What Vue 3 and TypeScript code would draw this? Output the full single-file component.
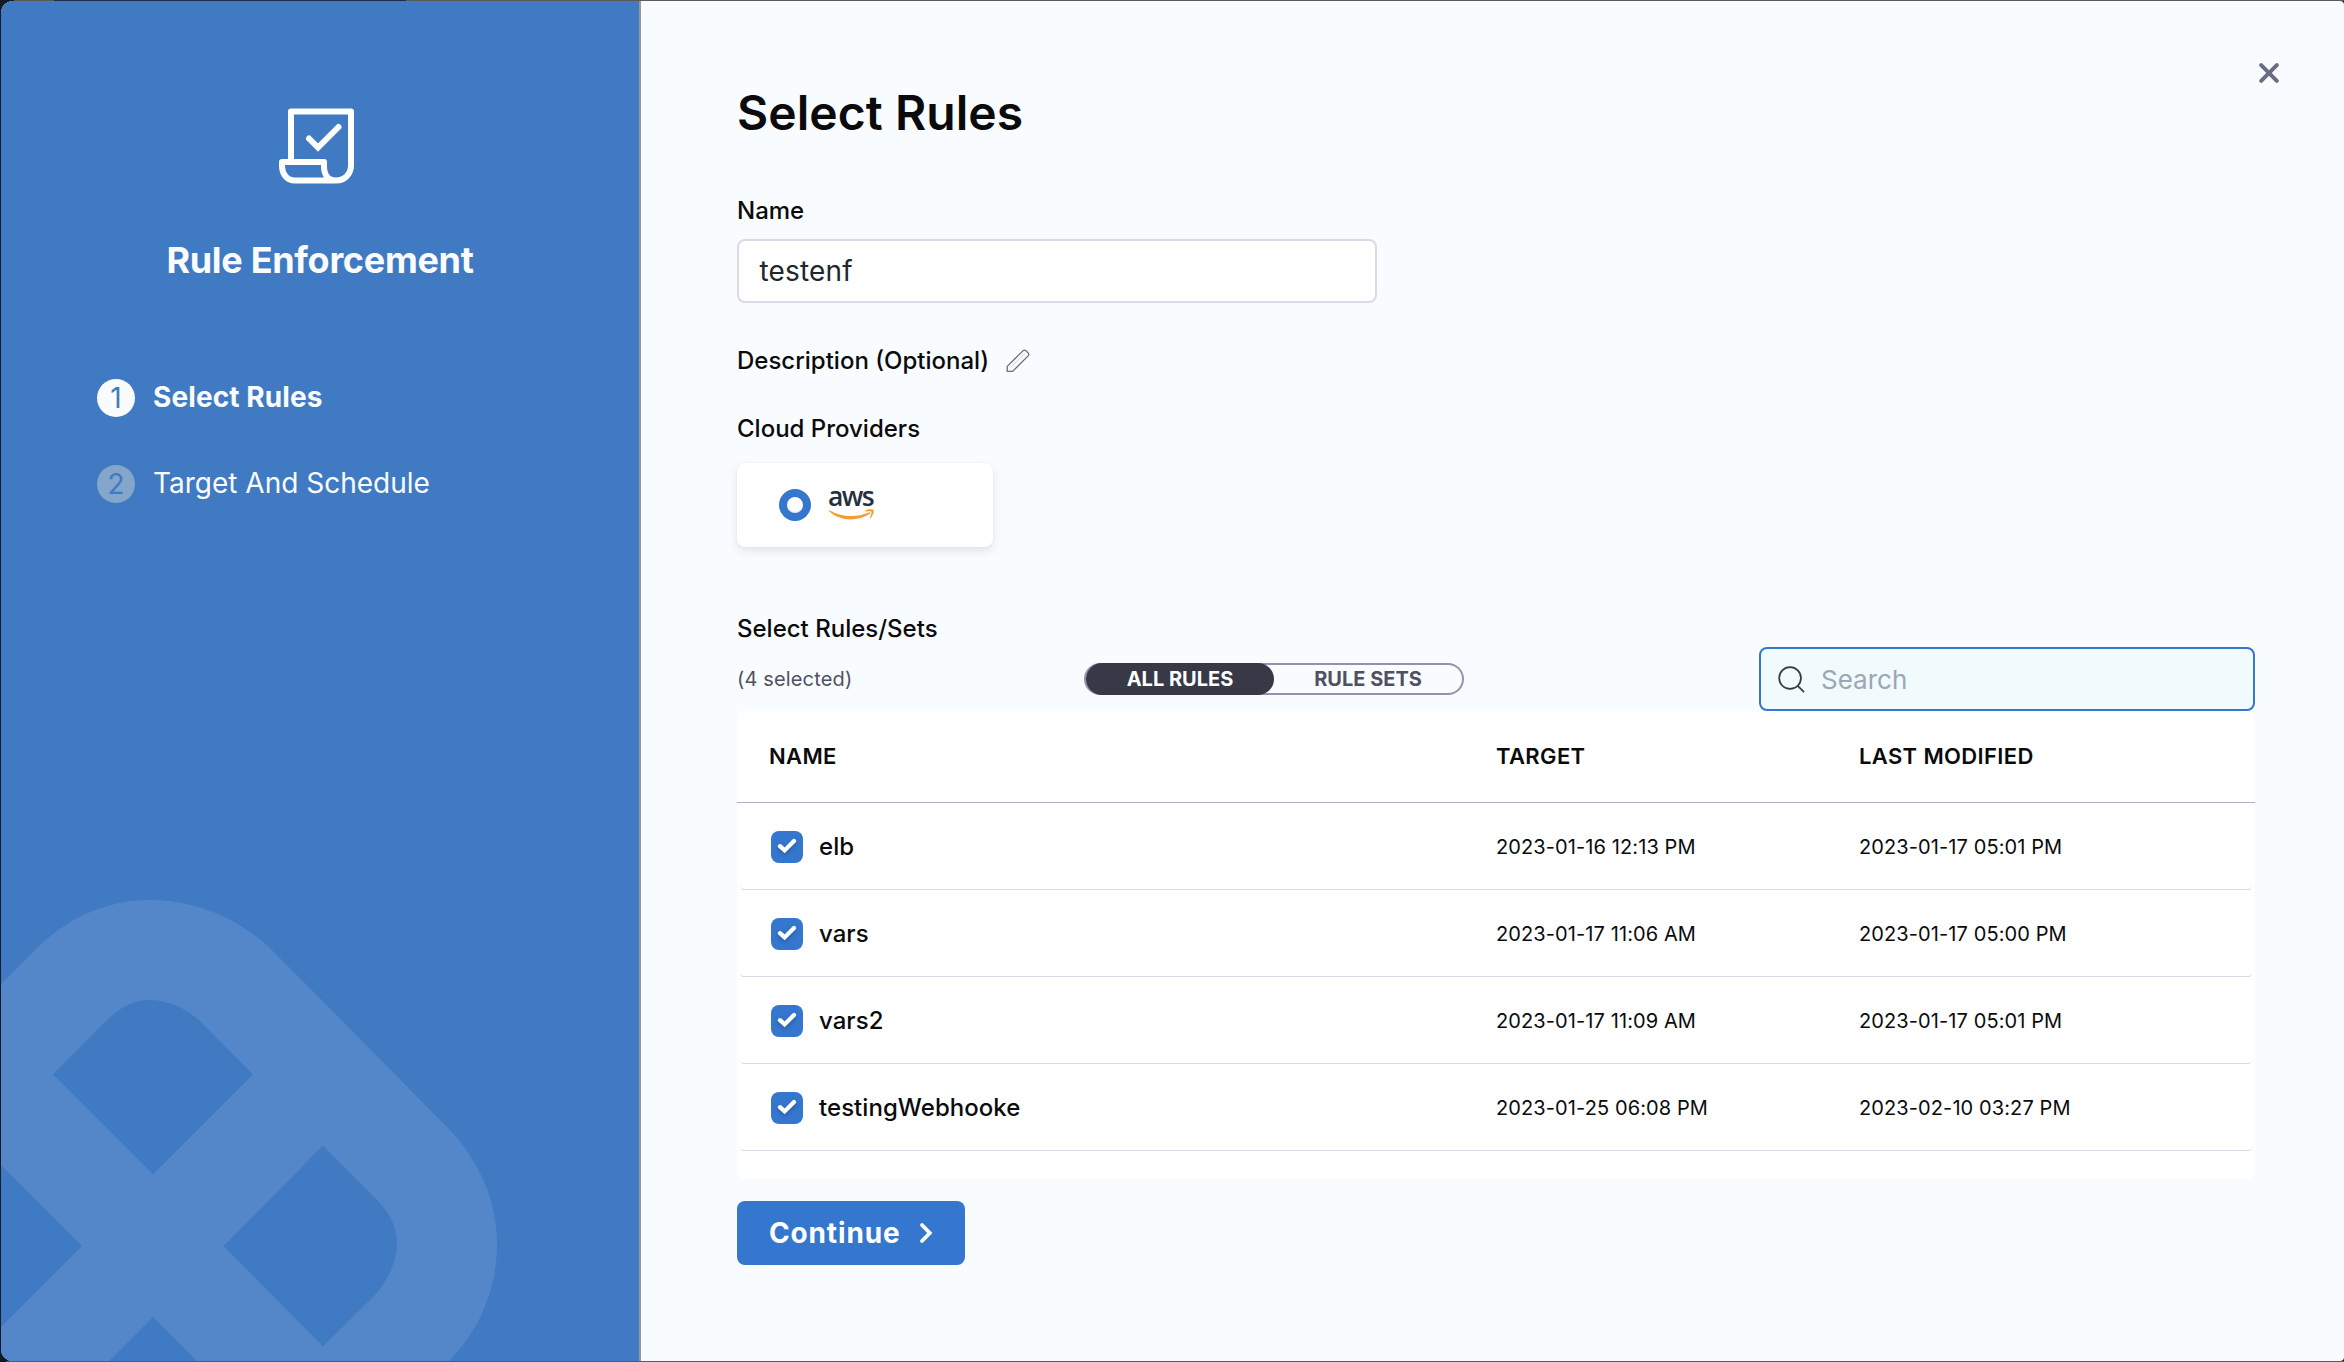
<script setup lang="ts">
interface Step {
  id: number
  label: string
  active: boolean
}

interface Rule {
  name: string
  target: string
  modified: string
}

const steps: Step[] = [
  { id: 1, label: 'Select Rules', active: true },
  { id: 2, label: 'Target And Schedule', active: false },
]

const rules: Rule[] = [
  { name: 'elb', target: '2023-01-16 12:13 PM', modified: '2023-01-17 05:01 PM' },
  { name: 'vars', target: '2023-01-17 11:06 AM', modified: '2023-01-17 05:00 PM' },
  { name: 'vars2', target: '2023-01-17 11:09 AM', modified: '2023-01-17 05:01 PM' },
  { name: 'testingWebhooke', target: '2023-01-25 06:08 PM', modified: '2023-02-10 03:27 PM' },
]
</script>

<template>
  <div class="screen">
    <div class="dialog">
      <aside class="side">
        <svg class="mark" width="500" height="462" viewBox="0 899 500 462">
          <path
            fill="#5487ca"
            fill-rule="evenodd"
            d="M-100 1087 L35 950 C67 918 106 900 150 900 C195 900 240 918 275 953 L446 1126 C480 1160 497 1202 497 1244 C497 1288 480 1330 449 1361 V1400 H-100 Z
               M53 1074.500 L105 1022 C119 1008 133 1000 149 1000 C168 1000 188 1008 206 1027 L253 1074.500 L153 1174.500 Z
               M323 1145.500 L377 1200 C390 1213 397 1227 397 1243 C397 1261 388 1281 374 1296 L323 1346.500 L223.500 1246 Z
               M-20 1144 L82 1246 L-20 1348 Z
               M153 1317 L100 1370 H206 Z"
          />
        </svg>
        <svg class="scroll" width="76" height="76" viewBox="0 0 76 76" fill="none" stroke="#fff" stroke-width="6">
          <path d="M12 52V3.500H72V57C72 66 66 72.500 57 72.500H16C8 72.500 3 66 3 58V54H45V58C45 67 49 72.500 57 72.500" stroke-linejoin="round" />
          <path d="M30 30.500L39 39.500L59.500 19" stroke-linecap="round" />
        </svg>
        <h2 class="side-title">Rule Enforcement</h2>
        <ol class="steps">
          <li v-for="step in steps" :key="step.id" class="step" :class="{ active: step.active }">
            <span class="num">{{ step.id }}</span>
            <span class="step-label">{{ step.label }}</span>
          </li>
        </ol>
      </aside>

      <main class="main">
        <button class="close" aria-label="Close">
          <svg width="20" height="20" viewBox="0 0 20 20" fill="none" stroke="#6b6d85" stroke-width="4" stroke-linecap="round">
            <path d="M2.200 2.200L17.800 17.800M17.800 2.200L2.200 17.800" />
          </svg>
        </button>

        <h1 class="title">Select Rules</h1>
        <div class="label name-label">Name</div>
        <div class="input">testenf</div>

        <div class="label desc">
          <span>Description (Optional)</span>
          <svg width="24" height="24" viewBox="0 0 24 24" fill="none" stroke="#6b6d85" stroke-width="1.300" stroke-linejoin="round">
            <path d="M1.200 17.400L17.200 1.600Q18.500 .8 19.800 1.600L22 3.800Q23.400 5 22.400 6.600L6.600 22.400H1.200Z" />
            <path d="M4.500 18.500L19 4.500" stroke-width=".6" stroke="#b9bac9" />
          </svg>
        </div>

        <div class="label cloud">Cloud Providers</div>
        <div class="provider">
          <span class="radio"></span>
          <div class="aws">
            <span class="aws-text">aws</span>
            <svg class="aws-smile" width="47" height="12" viewBox="0 0 48 12.500" fill="#f79c34">
              <path d="M.4 2.200C.1 1.700 .8 1.100 1.400 1.500C14 8.700 29 9 42 3.600C43.300 3.100 44.200 4.200 43 5C30 13.700 12 13 .4 2.200Z" />
              <path d="M38.200 1.700C41 -.2 46 .1 46.800 .9C47.700 2 46.600 7 43.900 9.400C43.400 9.800 43 9.500 43.200 9C43.900 7.400 45.200 3.700 44.600 2.900C43.900 2.100 40.300 2.500 38.600 2.700C38 2.700 37.900 2.200 38.200 1.700Z" />
            </svg>
          </div>
        </div>

        <div class="label sets">Select Rules/Sets</div>
        <div class="toolbar">
          <span class="count">(4 selected)</span>
          <div class="toggle">
            <span class="pill on">ALL RULES</span>
            <span class="pill">RULE SETS</span>
          </div>
          <div class="search">
            <svg width="27" height="27" viewBox="0 0 28 28" fill="none" stroke="#383946" stroke-width="1.800">
              <circle cx="12.500" cy="12.500" r="11.300" />
              <path d="M20.500 20.500L27 27" />
            </svg>
            <span>Search</span>
          </div>
        </div>

        <div class="table">
          <div class="row head">
            <span class="c1">NAME</span>
            <span class="c2">TARGET</span>
            <span>LAST MODIFIED</span>
          </div>
          <div v-for="rule in rules" :key="rule.name" class="row body-row">
            <div class="c1 rule-name">
              <span class="check">
                <svg width="20" height="16" viewBox="0 0 20 16" fill="none" stroke="#fff" stroke-width="4.300">
                  <path d="M3 8.200L7.600 12.400L17 3" stroke-linecap="round" />
                </svg>
              </span>
              <span class="rule-text">{{ rule.name }}</span>
            </div>
            <span class="c2">{{ rule.target }}</span>
            <span>{{ rule.modified }}</span>
          </div>
        </div>

        <button class="continue">
          <span>Continue</span>
          <svg width="14" height="22" viewBox="0 0 14 22" fill="none" stroke="#fff" stroke-width="3.800" stroke-linecap="round">
            <path d="M3 3L10.800 11L3 19" />
          </svg>
        </button>
      </main>
    </div>
  </div>
</template>

<style>
html,
body {
  margin: 0;
  overflow: hidden;
}
</style>

<style scoped>
.screen {
  box-sizing: border-box;
  width: 2344px;
  height: 1362px;
  padding: 1px 0 1px 1px;
  background:
    linear-gradient(90deg, #101a28 0 14px, #5a5a5a 14px 54px, #1c2e50 54px 406px, #5a5a5a 406px) 0 0 / 100% 1px no-repeat,
    linear-gradient(90deg, #10191f 0 6px, #565b60 6px) 0 100% / 100% 1px no-repeat,
    #101a28;
  font-family: Inter, 'Liberation Sans', sans-serif;
  color: #0b0b0d;
}

.dialog {
  display: flex;
  height: 1360px;
  border-radius: 12px 4px 4px 12px;
  overflow: hidden;
  background: #f9fcff;
}

.side {
  position: relative;
  box-sizing: border-box;
  width: 640px;
  flex: none;
  border-right: 2px solid #979797;
  background: #407ac3;
  color: #fafbfc;
}

.mark {
  position: absolute;
  left: -1px;
  bottom: 0;
}

.scroll {
  display: block;
  margin: 107px 0 0 278px;
}

.side-title {
  position: relative;
  margin: 52px 0 0;
  font-size: 36px;
  line-height: 48px;
  font-weight: 650;
  letter-spacing: -0.3px;
  text-align: center;
}

.steps {
  list-style: none;
  margin: 95px 0 0 96px;
  padding: 0;
  display: flex;
  flex-direction: column;
  gap: 48px;
}

.step {
  display: flex;
  align-items: center;
  gap: 18px;
  height: 38px;
  font-size: 28px;
}

.step-label {
  margin-bottom: 2px;
}

.num {
  width: 38px;
  height: 38px;
  border-radius: 50%;
  background: #85a6cb;
  color: #407ac3;
  line-height: 38px;
  text-align: center;
}

.active .num {
  background: #fafbfc;
}

.active .step-label {
  font-weight: 700;
  letter-spacing: 0.1px;
}

.main {
  position: relative;
  flex: 1;
  padding: 82px 0 0 96px;
}

.close {
  position: absolute;
  top: 62px;
  right: 65px;
  padding: 0;
  border: 0;
  background: none;
  line-height: 0;
}

.title {
  margin: 0;
  font-size: 48px;
  line-height: 60px;
  font-weight: 620;
  letter-spacing: 0.05px;
}

.label {
  font-size: 24px;
  line-height: 30px;
  font-weight: 500;
}

.name-label {
  margin-top: 53px;
}

.input {
  box-sizing: border-box;
  width: 640px;
  height: 64px;
  margin-top: 13px;
  padding-left: 20.5px;
  border: 2px solid #d9dae5;
  border-radius: 8px;
  background: #fff;
  color: #22272d;
  font-size: 28px;
  line-height: 60px;
  letter-spacing: 0.15px;
}

.desc {
  display: flex;
  align-items: center;
  gap: 16.5px;
  margin-top: 43px;
}

.cloud {
  margin-top: 38px;
}

.provider {
  display: flex;
  align-items: center;
  box-sizing: border-box;
  width: 256px;
  height: 84px;
  margin-top: 19px;
  padding-left: 42px;
  border-radius: 8px;
  background: #fff;
  box-shadow: 0 4px 8px rgba(96, 97, 112, 0.16), 0 0 2px rgba(40, 41, 61, 0.06);
}

.radio {
  box-sizing: border-box;
  width: 32px;
  height: 32px;
  border: 8px solid #3576ce;
  border-radius: 50%;
  background: #fff;
  box-shadow: inset 0 -1px 2px rgba(20, 40, 80, 0.12);
}

.aws {
  display: flex;
  flex-direction: column;
  width: 48px;
  height: 34px;
  margin-left: 17px;
}

.aws-text {
  height: 20.5px;
  font-family: 'Open Sans', 'Noto Sans', sans-serif;
  font-size: 26.5px;
  font-weight: 600;
  line-height: 17px;
  letter-spacing: -1.6px;
  color: #252f3e;
}

.aws-smile {
  flex: none;
}

.sets {
  margin-top: 67px;
}

.toolbar {
  display: flex;
  align-items: center;
  height: 64px;
  margin-top: 3px;
}

.count {
  width: 347px;
  font-size: 20px;
  letter-spacing: 0.15px;
  color: #4f5162;
}

.toggle {
  box-sizing: border-box;
  display: flex;
  width: 380px;
  height: 32px;
  border: 2px solid #9293ab;
  border-radius: 16px;
}

.pill {
  width: 188px;
  height: 32px;
  margin: -2px 0;
  border-radius: 16px;
  color: #4f5162;
  font-size: 20px;
  font-weight: 700;
  line-height: 32px;
  letter-spacing: 0;
  text-align: center;
}

.on {
  background: #383946;
  color: #fff;
}

.search {
  box-sizing: border-box;
  display: flex;
  align-items: center;
  gap: 16px;
  width: 496px;
  height: 64px;
  margin-left: 295px;
  padding-left: 17px;
  border: 2px solid #3576ce;
  border-radius: 8px;
  background: #f1fafd;
  color: #9ba7b4;
  font-size: 26px;
}

.table {
  width: 1518px;
  height: 468px;
  border-radius: 8px;
  background: #fff;
}

.row {
  display: flex;
  align-items: center;
  box-sizing: border-box;
}

.head {
  height: 92px;
  padding-left: 32px;
  padding-bottom: 2px;
  border-bottom: 1px solid #b0b1c4;
  font-size: 22px;
  font-weight: 600;
  letter-spacing: 0.36px;
}

.head .c1 {
  width: 727px;
}

.c2 {
  width: 363px;
}

.body-row {
  height: 87px;
  margin: 0 3px;
  padding: 2px 0 0 31px;
  border-bottom: 1px solid #d9dae5;
  border-radius: 4px;
  font-size: 20px;
  letter-spacing: 0.1px;
}

.body-row .c1 {
  width: 725px;
}

.rule-name {
  display: flex;
  align-items: center;
  gap: 16px;
  font-size: 24px;
  font-weight: 500;
  letter-spacing: 0.05px;
}

.rule-text {
  margin-bottom: 2px;
}

.check {
  display: flex;
  align-items: center;
  justify-content: center;
  width: 32px;
  height: 32px;
  border-radius: 8px;
  background: #3576ce;
}

.check svg {
  margin-top: -2px;
  filter: drop-shadow(0 2px 2px rgba(20, 40, 80, 0.35));
}

.continue {
  display: flex;
  align-items: center;
  gap: 18px;
  width: 228px;
  height: 64px;
  margin-top: 22px;
  padding: 0 0 0 32px;
  border: 0;
  border-radius: 8px;
  background: #3576ce;
  color: #fff;
  font-family: inherit;
  font-size: 28px;
  font-weight: 700;
  letter-spacing: 0.85px;
}
</style>
